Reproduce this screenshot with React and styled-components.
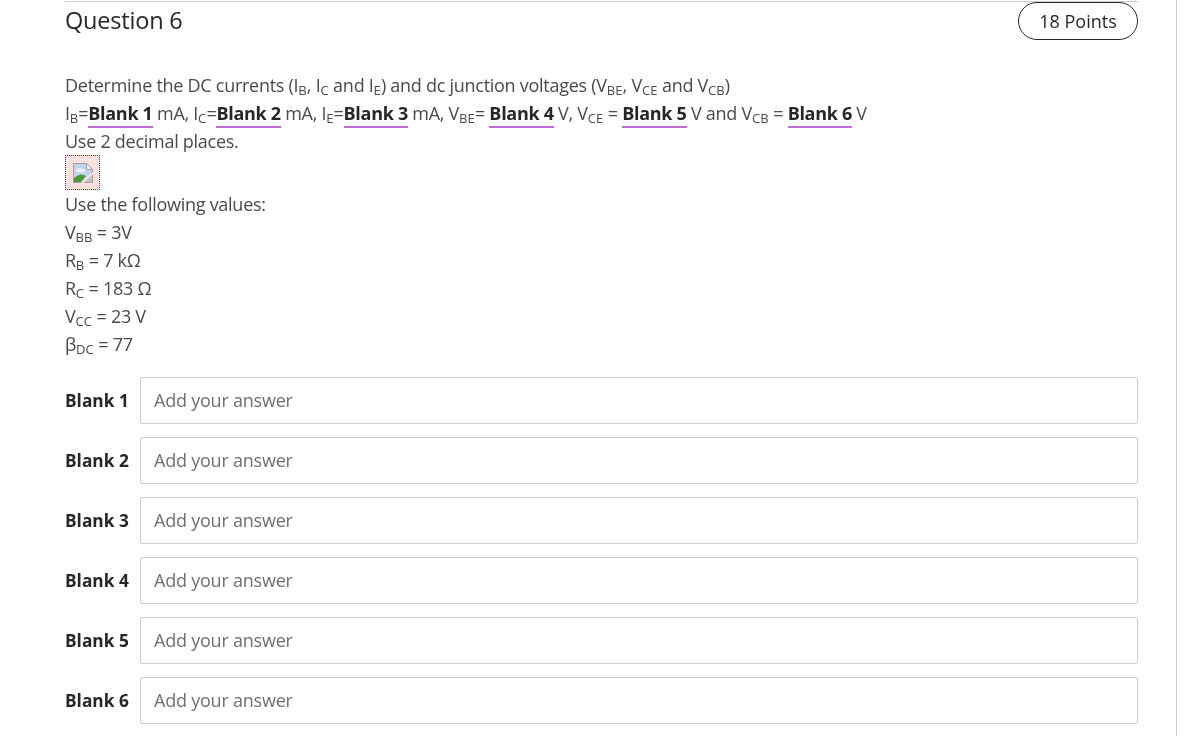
import React from "react";
import styled, { createGlobalStyle } from "styled-components";

const Global = createGlobalStyle`
  html, body { margin: 0; padding: 0; background: #fff; height: 100%; overflow: hidden; }
  body { font-family: "Open Sans", "Liberation Sans", sans-serif; color: #262626; }
`;
const Page = styled.div`
  width: 1177px; height: 736px; box-sizing: border-box; overflow: hidden;
  border-right: 1px solid #cdcdcd; padding-left: 65px; will-change: opacity;
`;
const Column = styled.div`
  width: 1073px; display: flex; flex-direction: column;
`;
const Header = styled.header`
  display: flex; justify-content: space-between; align-items: flex-start;
  border-top: 1px solid #cdcdcd; height: 70px; box-sizing: border-box; margin-top: 1px;
`;
const Title = styled.h2`
  margin: 2px 0 0; font-size: 23.5px; font-weight: 400; line-height: 33px; color: #262626; letter-spacing: -0.2px;
`;
const Points = styled.div`
  display: flex; align-items: center; justify-content: center; width: 120px; height: 38px; box-sizing: border-box;
  border: 1px solid #262626; border-radius: 19px; font-size: 18px; color: #262626;
`;
const Body = styled.div`
  font-size: 18px; line-height: 28px; color: #4a4a4a; letter-spacing: -0.27px;
`;
const Line = styled.div`
  height: 28px; white-space: nowrap;
`;
const Sub = styled.sub`
  font-size: 13px; line-height: 0; vertical-align: -3px; letter-spacing: 0.1px;
`;
const Ref = styled.strong`
  font-weight: 700; color: #262626; display: inline-block; line-height: 24px; border-bottom: 2px solid #c06bd1; height: 27px; box-sizing: border-box; letter-spacing: -0.3px;
`;
const ImageBox = styled.div`
  width: 35px; height: 35px; box-sizing: border-box; border: 1px dotted #e00000; background: #ffe0e0;
  display: flex; align-items: center; justify-content: center;
`;
const Values = styled.div``;
const Form = styled.div`
  margin-top: 19px; display: flex; flex-direction: column; gap: 13px;
`;
const Row = styled.div`
  display: flex; align-items: center; height: 47px;
`;
const Label = styled.label`
  width: 75px; flex: none; font-size: 17.3px; font-weight: 700; color: #262626;
`;
const Input = styled.input`
  flex: 1; height: 47px; box-sizing: border-box; border: 1px solid #cdcdcd; border-radius: 2px; padding: 0 13px 2px;
  font: 400 18px "Open Sans", "Liberation Sans", sans-serif; color: #262626; background: transparent; outline: none; letter-spacing: -0.22px;
  &::placeholder { color: #6f6f6f; opacity: 1; }
`;

const BrokenImage = () => (
  <svg width="20" height="20" viewBox="0 0 20 20" aria-hidden="true">
    <path d="M0.5 0.5H13.5L19.5 6.5V19.5H0.5Z" fill="#c5d4ee" stroke="#a0a0a0" />
    <path d="M13.5 0.5V6.5H19.5Z" fill="#f6f6f6" stroke="#a0a0a0" />
    <path d="M3 7 Q6 4 9 6 Q12 5 13 8 Q9 10 5 9 Q3 9 3 7Z" fill="#eef3fb" />
    <path d="M1 19 V15 Q7 9 13 13 L8 19Z" fill="#4e9a36" />
    <path d="M11 19 L19 12 V19Z" fill="#c4c4c4" />
    <path d="M9 20 L20 10" stroke="#ffe0e0" strokeWidth="2" />
  </svg>
);

const V = ({ s }) => <Sub>{s}</Sub>;
const blanks = [1, 2, 3, 4, 5, 6];

export default function App() {
  return (
    <>
      <Global />
      <Page>
        <Column>
          <Header>
            <Title>Question 6</Title>
            <Points>18 Points</Points>
          </Header>
          <Body>
            <Line>Determine the DC currents (I<V s="B" />, I<V s="C" /> and I<V s="E" />) and dc junction voltages (V<V s="BE" />, V<V s="CE" /> and V<V s="CB" />)</Line>
            <Line>
              I<V s="B" />=<Ref>Blank 1</Ref> mA, I<V s="C" />=<Ref>Blank 2</Ref> mA, I<V s="E" />=<Ref>Blank 3</Ref> mA, V<V s="BE" />= <Ref>Blank 4</Ref> V, V<V s="CE" /> = <Ref>Blank 5</Ref> V and V<V s="CB" /> = <Ref>Blank 6</Ref> V
            </Line>
            <Line>Use 2 decimal places.</Line>
            <ImageBox><BrokenImage /></ImageBox>
            <Values>
              <Line>Use the following values:</Line>
              <Line>V<V s="BB" /> = 3V</Line>
              <Line>R<V s="B" /> = 7 kΩ</Line>
              <Line>R<V s="C" /> = 183 Ω</Line>
              <Line>V<V s="CC" /> = 23 V</Line>
              <Line>β<V s="DC" /> = 77</Line>
            </Values>
          </Body>
          <Form>
            {blanks.map((n) => (
              <Row key={n}>
                <Label>Blank {n}</Label>
                <Input placeholder="Add your answer" readOnly />
              </Row>
            ))}
          </Form>
        </Column>
      </Page>
    </>
  );
}
